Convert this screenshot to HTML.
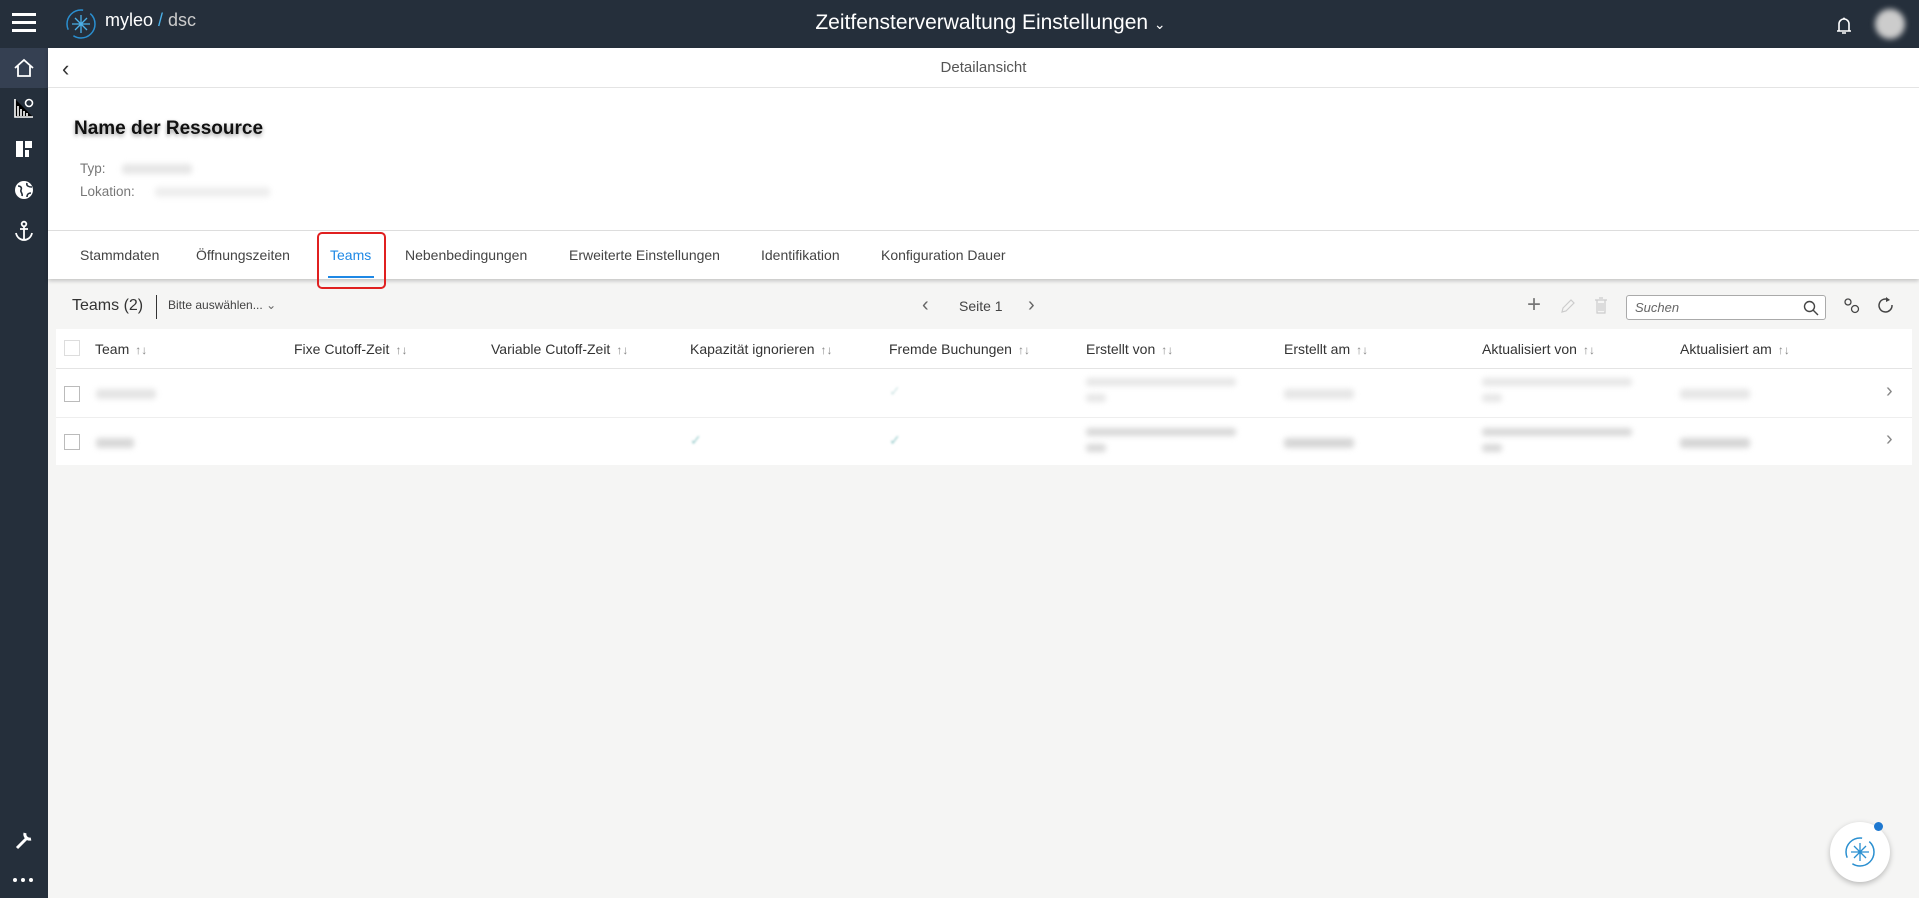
<!DOCTYPE html>
<html><head><meta charset="utf-8"><style>
*{box-sizing:border-box;margin:0;padding:0}
body{width:1919px;height:898px;overflow:hidden;background:#f5f5f4;font-family:"Liberation Sans",sans-serif;color:#333;position:relative;font-size:14px}
.top{position:absolute;left:0;top:0;width:1919px;height:48px;background:#252f3b}
.side{position:absolute;left:0;top:48px;width:48px;height:850px;background:#252f3b}
.abs{position:absolute}
.blur{filter:blur(3px);background:#ddd;border-radius:3px}
.th{position:absolute;top:341px;font-size:14px;color:#333;white-space:nowrap}
.arr{color:#888;font-size:12px;margin-left:6px}
.cb{position:absolute;left:64px;width:16px;height:16px;border:1.5px solid #bbb;background:#fff}
</style></head><body>
<div class="top">
 <div class="abs" style="left:12px;top:13px;width:24px;height:3px;background:#fff;box-shadow:0 8px 0 #fff,0 16px 0 #fff"></div>
 <svg class="abs" style="left:64px;top:7px" width="34" height="34" viewBox="0 0 34 34"><circle cx="17" cy="17" r="14" fill="none" stroke="#2a8fd0" stroke-width="1.5" stroke-dasharray="30 8"/><g stroke="#4bb0e8" stroke-width="1.3"><path d="M17 8v18M8 17h18M11 11l12 12M23 11L11 23"/></g></svg>
 <div class="abs" style="left:105px;top:10px;color:#fff;font-size:18px">myleo<span style="color:#4bb0e8"> / </span><span style="color:#ccc">dsc</span></div>
 <div class="abs" style="left:0;width:1919px;top:11px;text-align:center;color:#fff;font-size:21px;padding-left:62px">Zeitfensterverwaltung Einstellungen <span style="font-size:14px">&#8964;</span></div>
 <svg class="abs" style="left:1832px;top:13px" width="24" height="24" viewBox="0 0 24 24"><path d="M5 18h14M7 18V11a5 5 0 0 1 10 0v7M10 20h4" fill="none" stroke="#fff" stroke-width="1.6"/><circle cx="12" cy="5.5" r="1" fill="#fff"/></svg>
 <div class="abs" style="left:1875px;top:9px;width:30px;height:30px;border-radius:50%;background:#ccc;filter:blur(3px)"></div>
</div>
<div class="side">
 <div class="abs" style="left:0;top:0;width:48px;height:40px;background:#354052"></div>
 <svg class="abs" style="left:13px;top:9px" width="22" height="22" viewBox="0 0 22 22"><path d="M2 11L11 3l9 8M5 9v10h12V9" fill="none" stroke="#fff" stroke-width="1.8"/></svg>
 <svg class="abs" style="left:14px;top:50px" width="20" height="20"><path d="M1 1v18h18M4 18V8M7 18V11M10 18V13M13 18v-3" stroke="#fff" stroke-width="1.6"/><circle cx="15" cy="5" r="3.5" fill="none" stroke="#fff" stroke-width="1.6"/></svg>
 <svg class="abs" style="left:15px;top:92px" width="18" height="18"><path d="M1 1h7v16H1zM10 1h7v7h-7zM10 10h4v7h-4z" fill="#fff"/></svg>
 <svg class="abs" style="left:14px;top:132px" width="20" height="20"><circle cx="10" cy="10" r="9" fill="#fff"/><path d="M4 6c3 0 4 2 3 4s2 3 1 6M13 3c-1 3 2 4 5 4M13 17c0-3 2-4 4-4" stroke="#252f3b" stroke-width="1.6" fill="none"/></svg>
 <svg class="abs" style="left:13px;top:172px" width="22" height="22"><circle cx="11" cy="4" r="2.3" fill="none" stroke="#fff" stroke-width="1.8"/><path d="M11 6v14M7 9h8M3 13c1 5 5 7 8 7s7-2 8-7" fill="none" stroke="#fff" stroke-width="1.8"/></svg>
 <svg class="abs" style="left:13px;top:781px" width="22" height="22"><path d="M4 19l9-9M12 4a5 5 0 0 0 6 6" stroke="#fff" stroke-width="3" fill="none"/></svg>
 <div class="abs" style="left:13px;top:830px;width:4px;height:4px;border-radius:50%;background:#fff;box-shadow:8px 0 0 #fff,16px 0 0 #fff"></div>
</div>
<div class="abs" style="left:48px;top:48px;width:1871px;height:231px;background:#fff;box-shadow:0 2px 4px rgba(0,0,0,.2)"></div>
<div class="abs" style="left:48px;top:87px;width:1871px;height:1px;background:#e4e4e4"></div>
<div class="abs" style="left:62px;top:56px;font-size:22px;color:#333">&#8249;</div>
<div class="abs" style="left:48px;width:1871px;top:59px;text-align:center;font-size:15px;color:#555">Detailansicht</div>
<div class="abs" style="left:74px;top:118px;font-size:19px;font-weight:bold;color:#111;text-shadow:0 2px 4px rgba(0,0,0,.4)">Name der Ressource</div>
<div class="abs" style="left:80px;top:161px;color:#777;font-size:13.5px">Typ:</div>
<div class="abs blur" style="left:122px;top:164px;width:70px;height:10px;background:#e6e6e6"></div>
<div class="abs" style="left:80px;top:184px;color:#777;font-size:13.5px">Lokation:</div>
<div class="abs blur" style="left:155px;top:187px;width:115px;height:10px;background:#eee"></div>
<div class="abs" style="left:48px;top:230px;width:1871px;height:1px;background:#ddd"></div>
<div class="abs" style="top:247px;left:0;font-size:14px;color:#444;white-space:nowrap">
 <span class="abs" style="left:80px">Stammdaten</span><span class="abs" style="left:196px">Öffnungszeiten</span><span class="abs" style="left:330px;color:#1e88e5">Teams</span><span class="abs" style="left:405px">Nebenbedingungen</span><span class="abs" style="left:569px">Erweiterte Einstellungen</span><span class="abs" style="left:761px">Identifikation</span><span class="abs" style="left:881px">Konfiguration Dauer</span>
</div>
<div class="abs" style="left:328px;top:276px;width:46px;height:2px;background:#1e88e5"></div>
<div class="abs" style="left:317px;top:232px;width:69px;height:57px;border:2px solid #e02020;border-radius:5px"></div>
<div class="abs" style="left:72px;top:297px;font-size:16px;color:#333">Teams (2)</div>
<div class="abs" style="left:156px;top:295px;width:1px;height:24px;background:#333"></div>
<div class="abs" style="left:168px;top:298px;font-size:12px;color:#444">Bitte auswählen... <span style="color:#666">&#8964;</span></div>
<div class="abs" style="left:922px;top:294px;font-size:20px;color:#666">&#8249;</div>
<div class="abs" style="left:959px;top:298px;font-size:14px;color:#444">Seite 1</div>
<div class="abs" style="left:1028px;top:294px;font-size:20px;color:#666">&#8250;</div>
<div class="abs" style="left:1527px;top:291px;font-size:24px;color:#777;font-weight:300">+</div>
<svg class="abs" style="left:1560px;top:298px" width="16" height="16"><path d="M2 14l1-4 8-8 3 3-8 8z" fill="none" stroke="#ccc" stroke-width="1.2"/></svg>
<svg class="abs" style="left:1593px;top:297px" width="16" height="18"><path d="M2 3h12M4 3v13h8V3M6 1h4M6 6v8M8 6v8M10 6v8" fill="none" stroke="#ccc" stroke-width="1.2"/></svg>
<div class="abs" style="left:1626px;top:295px;width:200px;height:25px;border:1px solid #aaa;border-radius:3px;background:#fff"><span style="position:absolute;left:8px;top:4px;font-style:italic;color:#666;font-size:13px">Suchen</span>
<svg style="position:absolute;right:6px;top:4px" width="16" height="16"><circle cx="6.5" cy="6.5" r="5" fill="none" stroke="#444" stroke-width="1.4"/><path d="M10 10l5 5" stroke="#444" stroke-width="1.4"/></svg></div>
<svg class="abs" style="left:1843px;top:297px" width="18" height="18"><circle cx="5" cy="5" r="3" fill="none" stroke="#444" stroke-width="1.3"/><circle cx="12" cy="12" r="3.5" fill="none" stroke="#444" stroke-width="1.3"/></svg>
<svg class="abs" style="left:1876px;top:296px" width="18" height="18"><path d="M13 4a6.5 6.5 0 1 0 3 5" fill="none" stroke="#444" stroke-width="1.5"/><path d="M10 1l4 3-4 2z" fill="#444"/></svg>
<div class="abs" style="left:56px;top:329px;width:1856px;height:136px;background:#fff"></div>
<div class="abs" style="left:56px;top:368px;width:1856px;height:1px;background:#e4e4e4"></div>
<div class="abs" style="left:56px;top:417px;width:1856px;height:1px;background:#eee"></div>
<div class="cb" style="top:340px;border-color:#ddd"></div>
<div class="th" style="left:95px">Team<span class="arr">↑↓</span></div>
<div class="th" style="left:294px">Fixe Cutoff-Zeit<span class="arr">↑↓</span></div>
<div class="th" style="left:491px">Variable Cutoff-Zeit<span class="arr">↑↓</span></div>
<div class="th" style="left:690px">Kapazität ignorieren<span class="arr">↑↓</span></div>
<div class="th" style="left:889px">Fremde Buchungen<span class="arr">↑↓</span></div>
<div class="th" style="left:1086px">Erstellt von<span class="arr">↑↓</span></div>
<div class="th" style="left:1284px">Erstellt am<span class="arr">↑↓</span></div>
<div class="th" style="left:1482px">Aktualisiert von<span class="arr">↑↓</span></div>
<div class="th" style="left:1680px">Aktualisiert am<span class="arr">↑↓</span></div>
<div class="cb" style="top:386px"></div>
<div class="cb" style="top:434px"></div>
<div class="abs blur" style="left:96px;top:389px;width:60px;height:10px;background:#e4e4e4"></div>
<div class="abs blur" style="left:96px;top:438px;width:38px;height:10px;background:#d8d8d8"></div>
<div class="abs blur" style="left:1086px;top:378px;width:150px;height:8px;background:#e6e6e6"></div>
<div class="abs blur" style="left:1086px;top:394px;width:20px;height:8px;background:#e6e6e6"></div>
<div class="abs blur" style="left:1284px;top:389px;width:70px;height:10px;background:#e6e6e6"></div>
<div class="abs blur" style="left:1482px;top:378px;width:150px;height:8px;background:#e6e6e6"></div>
<div class="abs blur" style="left:1482px;top:394px;width:20px;height:8px;background:#e6e6e6"></div>
<div class="abs blur" style="left:1680px;top:389px;width:70px;height:10px;background:#e6e6e6"></div>
<div class="abs blur" style="left:1086px;top:428px;width:150px;height:8px;background:#d8d8d8"></div>
<div class="abs blur" style="left:1086px;top:444px;width:20px;height:8px;background:#d8d8d8"></div>
<div class="abs blur" style="left:1284px;top:438px;width:70px;height:10px;background:#d6d6d6"></div>
<div class="abs blur" style="left:1482px;top:428px;width:150px;height:8px;background:#d8d8d8"></div>
<div class="abs blur" style="left:1482px;top:444px;width:20px;height:8px;background:#d8d8d8"></div>
<div class="abs blur" style="left:1680px;top:438px;width:70px;height:10px;background:#d6d6d6"></div>
<div class="abs" style="left:889px;top:383px;color:#cfe5e5;font-size:14px;filter:blur(1px)">✓</div>
<div class="abs" style="left:690px;top:432px;color:#9cc;font-size:14px;filter:blur(1px)">✓</div>
<div class="abs" style="left:889px;top:432px;color:#9cc;font-size:14px;filter:blur(1px)">✓</div>
<div class="abs" style="left:1886px;top:380px;font-size:20px;color:#888">&#8250;</div>
<div class="abs" style="left:1886px;top:428px;font-size:20px;color:#888">&#8250;</div>
<div class="abs" style="left:1830px;top:822px;width:60px;height:60px;border-radius:50%;background:#fff;box-shadow:0 2px 6px rgba(0,0,0,.25)">
<svg style="position:absolute;left:13px;top:13px" width="34" height="34" viewBox="0 0 34 34"><circle cx="17" cy="17" r="14" fill="none" stroke="#2a8fd0" stroke-width="1.5" stroke-dasharray="30 8"/><g stroke="#2a8fd0" stroke-width="1.3"><path d="M17 8v18M8 17h18M11 11l12 12M23 11L11 23"/></g></svg></div>
<div class="abs" style="left:1874px;top:822px;width:9px;height:9px;border-radius:50%;background:#1e78d0"></div>
</body></html>
